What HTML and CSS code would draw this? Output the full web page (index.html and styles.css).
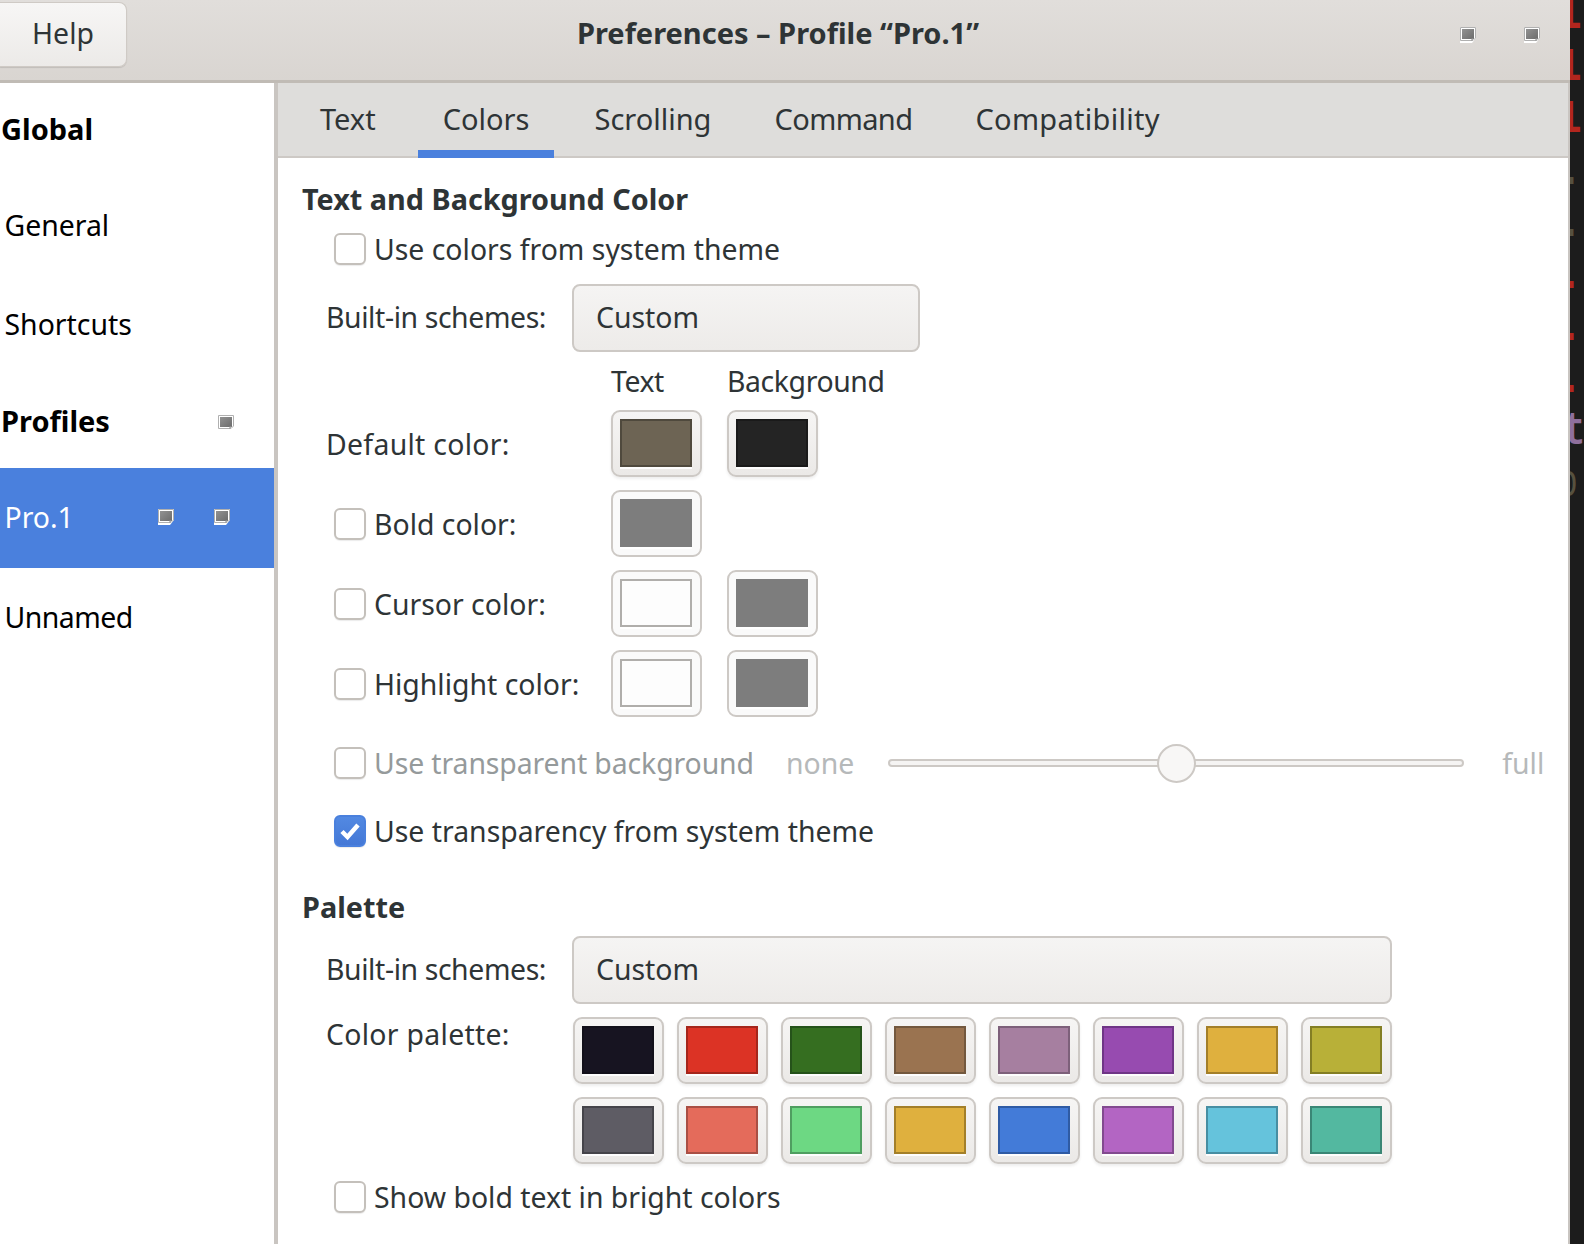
FILE: index.html
```html
<!DOCTYPE html>
<html lang="en">
<head>
  <meta charset="UTF-8">
  <title>Preferences – Profile “Pro.1”</title>
  <link rel="stylesheet" href="styles.css">
</head>
<body>
  <svg class="sprites" width="0" height="0">
    <defs>
      <linearGradient id="missing-fill" x1="0" y1="0" x2="1" y2="1">
        <stop offset="0" stop-color="#929292"/>
        <stop offset="1" stop-color="#6c6c6c"/>
      </linearGradient>
    </defs>
    <symbol id="missing" viewBox="0 0 16 16">
      <path d="M0 0h16v11l-4 5H0z" fill="#fff"/>
      <path d="M.5 .5h15v10.500l-2.500 2.500H.5z" fill="none" stroke="#b0b0b0"/>
      <rect x="2" y="2" width="12" height="10" fill="url(#missing-fill)"/>
      <path d="M11.500 14l2.500-3h-2.500z" fill="#8a8a8a"/>
    </symbol>
  </svg>

  <div class="window">
    <header class="headerbar">
      <button class="help-btn">Help</button>
      <div class="title">Preferences – Profile “Pro.1”</div>
      <div class="header-icons">
        <svg class="icon"><use href="#missing"/></svg>
        <svg class="icon"><use href="#missing"/></svg>
      </div>
    </header>

    <div class="main">
      <aside class="sidebar">
        <div class="side-row side-head">Global</div>
        <div class="side-row">General</div>
        <div class="side-row">Shortcuts</div>
        <div class="side-row side-head">
          <span>Profiles</span>
          <svg class="icon head-icon"><use href="#missing"/></svg>
        </div>
        <div class="side-row selected">
          <span>Pro.1</span>
          <span class="row-icons">
            <svg class="icon"><use href="#missing"/></svg>
            <svg class="icon"><use href="#missing"/></svg>
          </span>
        </div>
        <div class="side-row unnamed">Unnamed</div>
      </aside>

      <section class="content">
        <nav class="tabs">
          <div class="tab">Text</div>
          <div class="tab active">Colors</div>
          <div class="tab">Scrolling</div>
          <div class="tab tab-tight">Command</div>
          <div class="tab tab-wide">Compatibility</div>
        </nav>

        <div class="panel">
          <h2 class="section-title">Text and Background Color</h2>
          <label class="check-row first-check"><span class="check"></span>Use colors from system theme</label>

          <div class="scheme-row">
            <span class="field-label">Built-in schemes:</span>
            <div class="combo combo-short">Custom</div>
          </div>

          <div class="color-grid">
            <div></div>
            <div class="col-head">Text</div>
            <div class="col-head">Background</div>

            <div class="field-label">Default color:</div>
            <div class="swatch-btn"><span class="swatch" style="background:#6d6454;border-color:#4f493d"></span></div>
            <div class="swatch-btn"><span class="swatch" style="background:#242424;border-color:#1a1a1a"></span></div>

            <label class="check-row"><span class="check"></span>Bold color:</label>
            <div class="swatch-btn off"><span class="swatch" style="background:#7d7d7d;border-color:#7d7d7d"></span></div>
            <div></div>

            <label class="check-row"><span class="check"></span>Cursor color:</label>
            <div class="swatch-btn off"><span class="swatch" style="background:#fdfdfd;border-color:#b0aeab"></span></div>
            <div class="swatch-btn off"><span class="swatch" style="background:#7d7d7d;border-color:#7d7d7d"></span></div>

            <label class="check-row"><span class="check"></span>Highlight color:</label>
            <div class="swatch-btn off"><span class="swatch" style="background:#fdfdfd;border-color:#b0aeab"></span></div>
            <div class="swatch-btn off"><span class="swatch" style="background:#7d7d7d;border-color:#7d7d7d"></span></div>
          </div>

          <div class="transparent-row">
            <label class="check-row dim"><span class="check"></span>Use transparent background</label>
            <span class="scale-end">none</span>
            <div class="scale"><span class="thumb"></span></div>
            <span class="scale-end">full</span>
          </div>

          <label class="check-row theme-check"><span class="check checked">
            <svg viewBox="0 0 28 28"><path d="M6 14.500l5.500 5.500L22 8" fill="none" stroke="#fff" stroke-width="4.500"/></svg>
          </span>Use transparency from system theme</label>

          <h2 class="section-title palette-title">Palette</h2>

          <div class="scheme-row palette-scheme">
            <span class="field-label">Built-in schemes:</span>
            <div class="combo combo-long">Custom</div>
          </div>

          <div class="palette-row">
            <span class="field-label palette-label">Color palette:</span>
            <div class="palette">
              <div class="swatch-btn"><span class="swatch" style="background:#171421;border-color:#12101a"></span></div>
              <div class="swatch-btn"><span class="swatch" style="background:#dc3325;border-color:#a5261b"></span></div>
              <div class="swatch-btn"><span class="swatch" style="background:#356e20;border-color:#25521a"></span></div>
              <div class="swatch-btn"><span class="swatch" style="background:#9a7350;border-color:#73583e"></span></div>
              <div class="swatch-btn"><span class="swatch" style="background:#a67fa0;border-color:#7d607a"></span></div>
              <div class="swatch-btn"><span class="swatch" style="background:#974bb0;border-color:#6f3586"></span></div>
              <div class="swatch-btn"><span class="swatch" style="background:#dfb03e;border-color:#a37f29"></span></div>
              <div class="swatch-btn"><span class="swatch" style="background:#b8b038;border-color:#837e24"></span></div>
              <div class="swatch-btn"><span class="swatch" style="background:#5e5c64;border-color:#45444a"></span></div>
              <div class="swatch-btn"><span class="swatch" style="background:#e46b5b;border-color:#a94f44"></span></div>
              <div class="swatch-btn"><span class="swatch" style="background:#6dd883;border-color:#4f9e60"></span></div>
              <div class="swatch-btn"><span class="swatch" style="background:#dfb03e;border-color:#a37f29"></span></div>
              <div class="swatch-btn"><span class="swatch" style="background:#437bd8;border-color:#2f5ba4"></span></div>
              <div class="swatch-btn"><span class="swatch" style="background:#b365c3;border-color:#824a8f"></span></div>
              <div class="swatch-btn"><span class="swatch" style="background:#65c3dc;border-color:#478ea2"></span></div>
              <div class="swatch-btn"><span class="swatch" style="background:#53b8a0;border-color:#3a8675"></span></div>
            </div>
          </div>

          <label class="check-row bold-check"><span class="check"></span>Show bold text in bright colors</label>
        </div>
      </section>
    </div>
  </div>

  <div class="terminal">
    <div class="term-line red">L</div>
    <div class="term-line red">L</div>
    <div class="term-line red">L</div>
    <div class="term-line dot olive">.</div>
    <div class="term-line dot olive">.</div>
    <div class="term-line dot red">.</div>
    <div class="term-line dot red">.</div>
    <div class="term-line dot red">.</div>
    <div class="term-line tee purple">t</div>
    <div class="term-line zero olive">o</div>
  </div>
</body>
</html>
```

FILE: styles.css
```css
* {
  box-sizing: border-box;
}
body {
  margin: 0;
  width: 1584px;
  height: 1244px;
  overflow: hidden;
  display: flex;
  background: #1c1c1c;
  font-family: "Noto Sans", sans-serif;
  font-size: 28.4px;
  color: #2e3436;
}
.sprites {
  position: absolute;
}
.icon {
  width: 16px;
  height: 16px;
  display: block;
  flex: none;
}

.window {
  width: 1570px;
  height: 1244px;
  flex: none;
  display: flex;
  flex-direction: column;
  background: #fff;
}

/* header */
.headerbar {
  height: 83px;
  flex: none;
  display: flex;
  align-items: flex-start;
  background: linear-gradient(#e1dedb, #d9d5d1);
  border-bottom: 3px solid #c0bbb5;
}
.help-btn {
  width: 127px;
  height: 65px;
  margin-top: 2px;
  padding: 0 0 4px;
  font: inherit;
  color: #2e3436;
  background: linear-gradient(#f7f6f5, #eceae8);
  border: 1px solid #cfcac5;
  border-left: none;
  border-radius: 0 8px 8px 0;
  box-shadow: 0 1px 1px rgba(0, 0, 0, .12);
}
.title {
  flex: 1;
  height: 66px;
  line-height: 66px;
  text-align: center;
  font-size: 29px;
  font-weight: 700;
}
.header-icons {
  display: flex;
  gap: 48px;
  margin: 27px 30px 0 31px;
}

/* sidebar */
.main {
  flex: 1;
  display: flex;
  min-height: 0;
}
.sidebar {
  width: 278px;
  flex: none;
  border-right: 4px solid #c9c5c1;
  color: #000;
}
.side-row {
  height: 99px;
  display: flex;
  align-items: center;
  justify-content: space-between;
  padding: 0 0 2px 4.500px;
}
.side-head {
  height: 93.500px;
  font-size: 29px;
  font-weight: 700;
  padding-left: 1px;
  padding-right: 40px;
}
.head-icon {
  margin-top: 6px;
}
.selected {
  height: 100px;
  background: #4a80dd;
  color: #fff;
  padding-right: 44px;
}
.unnamed {
  letter-spacing: -.5px;
}
.row-icons {
  display: flex;
  gap: 40px;
}

/* tabs */
.content {
  flex: 1;
  border-right: 2px solid #c9c5c1;
  min-width: 0;
}
.tabs {
  height: 75px;
  display: flex;
  padding-left: 18px;
  gap: 17px;
  font-size: 29px;
  background: #dedddb;
  border-bottom: 2px solid #cdc9c5;
}
.tab {
  height: 75px;
  padding: 0 24px 5px;
  display: flex;
  align-items: center;
}
.active {
  border-bottom: 8px solid #4a80dd;
  margin-left: 1px;
  margin-right: -1px;
  padding: 3px 25px 0;
}
.tab-tight {
  letter-spacing: -.6px;
  margin-left: -2px;
}
.tab-wide {
  letter-spacing: .3px;
  margin-left: -2px;
}

/* panel */
.panel {
  padding: 22px 0 0 24px;
}
.section-title {
  margin: 0;
  font-size: 28.800px;
  line-height: 38px;
  font-weight: 700;
}
.check-row {
  display: flex;
  align-items: center;
  gap: 8px;
  margin-left: 32px;
}
.check {
  width: 32px;
  height: 32px;
  flex: none;
  border: 2px solid #c4c0bb;
  border-radius: 6px;
  background: #fff;
  box-shadow: 0 1px 1px rgba(0, 0, 0, .08);
}
.checked {
  background: linear-gradient(#5289e2, #4478d6);
  border-color: #4a80dd;
}
.checked svg {
  display: block;
  width: 28px;
  height: 28px;
}
.dim {
  color: #959a9b;
  letter-spacing: -.1px;
}
.first-check {
  margin-top: 12px;
  height: 38px;
}
.field-label {
  margin-left: 24px;
  letter-spacing: .3px;
}

.scheme-row {
  display: flex;
  align-items: center;
  margin-top: 16px;
}
.scheme-row .field-label {
  width: 246px;
  flex: none;
  padding-bottom: 2px;
  letter-spacing: -.4px;
}
.combo {
  height: 68px;
  padding: 0 0 2px 22px;
  display: flex;
  align-items: center;
  background: linear-gradient(#f5f4f3, #edebe9);
  border: 2px solid #cdc9c5;
  border-radius: 8px;
}
.combo-short {
  width: 348px;
}
.combo-long {
  width: 820px;
}

/* colour grid */
.color-grid {
  display: grid;
  grid-template-columns: 284px 91px 91px;
  grid-template-rows: 34px;
  grid-auto-rows: 67px;
  column-gap: 25px;
  row-gap: 13px;
  margin-top: 11px;
  align-items: center;
}
.col-head {
  line-height: 36px;
  align-self: start;
  white-space: nowrap;
  letter-spacing: -.4px;
}
.swatch-btn {
  width: 91px;
  height: 67px;
  padding: 7px;
  background: linear-gradient(#f6f5f4, #ebe9e7);
  border: 2px solid #cdc9c5;
  border-radius: 9px;
  box-shadow: 0 2px 3px rgba(0, 0, 0, .07);
}
.off {
  background: #fafafa;
  box-shadow: none;
}
.swatch {
  display: block;
  width: 72px;
  height: 48px;
  border: 2px solid;
  box-shadow: 0 2px 0 rgba(255, 255, 255, .9);
}

/* transparency */
.transparent-row {
  display: flex;
  align-items: center;
  margin-top: 26px;
  height: 40px;
}
.transparent-row .check-row {
  width: 452px;
  flex: none;
  white-space: nowrap;
}
.scale-end {
  color: #b6b9ba;
}
.scale {
  position: relative;
  width: 576px;
  height: 8px;
  margin: 0 38px 0 34px;
  background: #f5f4f3;
  border: 2px solid #cdc9c5;
  border-radius: 4px;
}
.thumb {
  position: absolute;
  left: 267px;
  top: -17px;
  width: 39px;
  height: 39px;
  border-radius: 50%;
  background: #f8f7f6;
  border: 2px solid #cdc9c5;
}
.theme-check {
  margin-top: 31px;
  height: 34px;
}
.palette-title {
  margin-top: 40px;
}
.palette-scheme {
  margin-top: 10px;
}
.palette-row {
  display: flex;
  margin-top: 13px;
}
.palette-label {
  width: 247px;
  flex: none;
  line-height: 34px;
}
.palette {
  display: grid;
  grid-template-columns: repeat(8, 91px);
  gap: 13px;
}
.bold-check {
  margin-top: 14px;
}

/* terminal sliver on the right */
.terminal {
  flex: 1;
  min-width: 0;
  overflow: hidden;
  margin-top: -10px;
  font-family: "Liberation Mono", monospace;
  font-size: 47px;
  font-weight: 700;
  line-height: 52px;
}
.term-line {
  height: 52px;
  transform: scaleX(.5);
  transform-origin: left;
  margin-left: -3px;
}
.dot {
  transform: none;
  margin-left: -14px;
}
.tee {
  transform: scaleX(.8);
  margin-left: -7px;
}
.zero {
  font-weight: 400;
  transform: scaleX(.7);
  margin-left: -12px;
}
.red {
  color: #b3261e;
}
.olive {
  color: #57513f;
}
.purple {
  color: #8f6f9c;
}
```
